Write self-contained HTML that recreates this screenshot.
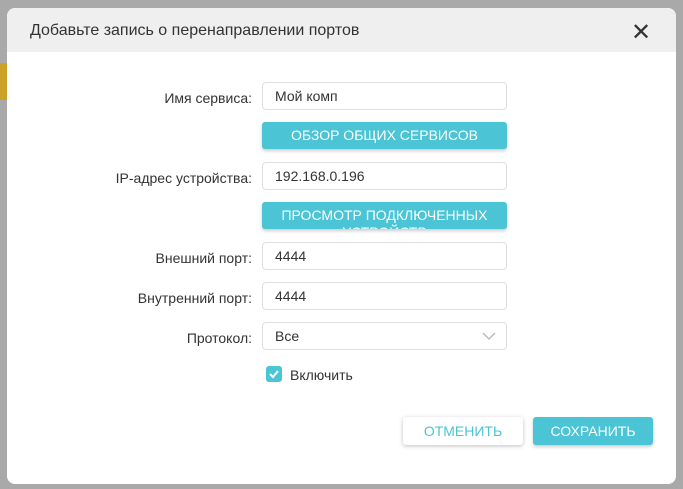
<!DOCTYPE html>
<html><head><meta charset="utf-8"><style>
body{margin:0;width:683px;height:489px;background:#a9a9a9;position:relative;overflow:hidden;font-family:"Liberation Sans",sans-serif;}
.y{position:absolute;left:0;top:63px;width:7px;height:37px;background:#c9a227}
.m{position:absolute;left:7px;top:8px;width:669px;height:476px;background:#fff;border-radius:8px;overflow:hidden}
.h{height:44px;background:#efefef;position:relative}
.h span{position:absolute;left:23px;top:14px;font-size:16px;color:#333}
.x{position:absolute;left:624px;top:10px;font-size:24px;color:#333}
.l{position:absolute;right:424px;font-size:14px;color:#333;text-align:right;white-space:nowrap}
.i{position:absolute;left:255px;width:231px;height:26px;border:1px solid #ddd;border-radius:4px;font-size:14px;color:#333;padding-left:12px;line-height:26px}
.b{position:absolute;left:255px;width:245px;height:27px;background:#4bc4d5;border-radius:3px;box-shadow:0 2px 3px rgba(0,0,0,.2);color:#fff;font-size:14px;text-align:center;line-height:27px;overflow:hidden}
</style></head><body>
<div class="y"></div>
<div class="m">
<div class="h"><span>Добавьте запись о перенаправлении портов</span><div class="x">✕</div></div>
<div class="l" style="top:82px">Имя сервиса:</div><div class="i" style="top:74px">Мой комп</div>
<div class="b" style="top:114px">ОБЗОР ОБЩИХ СЕРВИСОВ</div>
<div class="l" style="top:162px">IP-адрес устройства:</div><div class="i" style="top:154px">192.168.0.196</div>
<div class="b" style="top:194px;line-height:17px;padding-top:5px;height:22px">ПРОСМОТР ПОДКЛЮЧЕННЫХ<br>УСТРОЙСТВ</div>
<div class="l" style="top:242px">Внешний порт:</div><div class="i" style="top:234px">4444</div>
<div class="l" style="top:282px">Внутренний порт:</div><div class="i" style="top:274px">4444</div>
<div class="l" style="top:322px">Протокол:</div><div class="i" style="top:314px">Все<svg style="position:absolute;right:10px;top:9px" width="14" height="9"><path d="M1 1l6 6 6-6" stroke="#bbb" fill="none" stroke-width="1.5"/></svg></div>
<div style="position:absolute;left:259px;top:358px;width:16px;height:16px;background:#4bc4d5;border-radius:3px"><svg width="16" height="16"><path d="M4 8l3 3 5-6" stroke="#fff" fill="none" stroke-width="2"/></svg></div>
<div style="position:absolute;left:283px;top:359px;font-size:14px;color:#333">Включить</div>
<div style="position:absolute;left:396px;top:409px;width:120px;height:28px;background:#fff;border-radius:3px;box-shadow:0 1px 4px rgba(0,0,0,.25);color:#4bc4d5;font-size:14px;text-align:center;line-height:28px">ОТМЕНИТЬ</div>
<div style="position:absolute;left:526px;top:409px;width:120px;height:28px;background:#4bc4d5;border-radius:3px;box-shadow:0 2px 3px rgba(0,0,0,.2);color:#fff;font-size:14px;text-align:center;line-height:28px">СОХРАНИТЬ</div>
</div>
</body></html>
